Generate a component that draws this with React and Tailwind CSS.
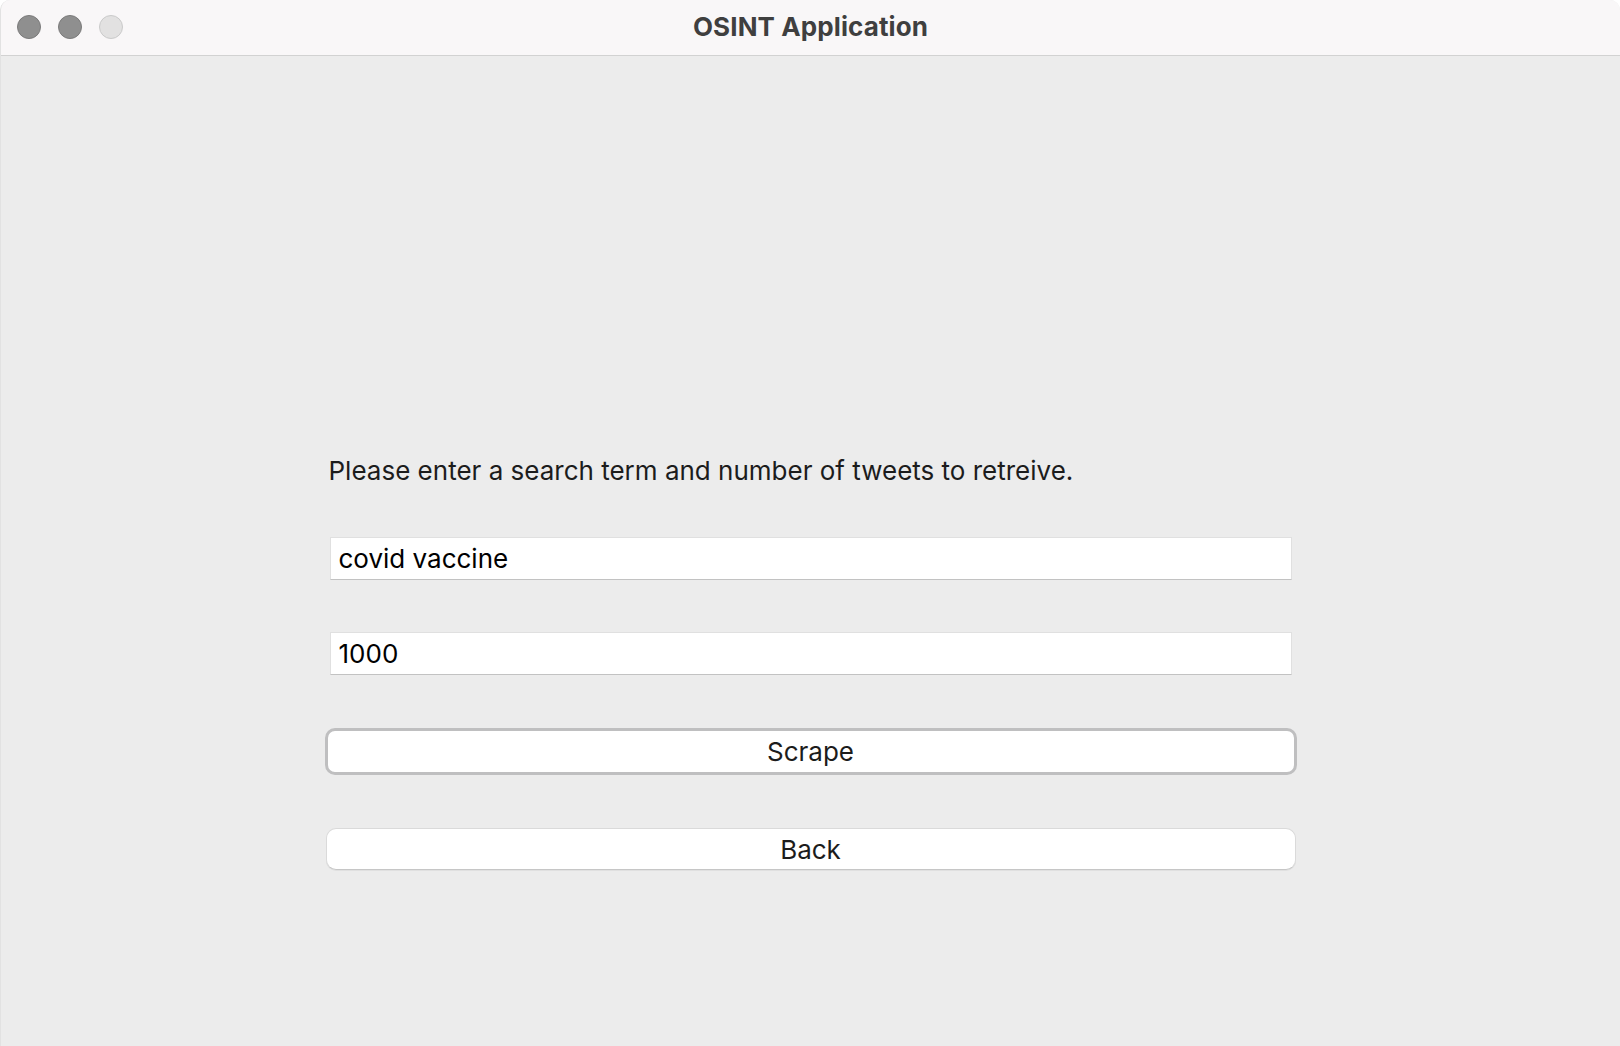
import { useState } from "react";

const font = { fontFamily: "Inter, 'Noto Sans', sans-serif" };

function TrafficLights() {
  return (
    <div className="absolute left-[16px] top-[15px] flex gap-[17px]">
      <span className="block w-[24px] h-[24px] rounded-full bg-[#8f8f8f] border border-[#7b7b7b]" />
      <span className="block w-[24px] h-[24px] rounded-full bg-[#8f8f8f] border border-[#7b7b7b]" />
      <span className="block w-[24px] h-[24px] rounded-full bg-[#e2e1e1] border border-[#cacaca]" />
    </div>
  );
}

export default function App() {
  const [term, setTerm] = useState("covid vaccine");
  const [count, setCount] = useState("1000");

  return (
    <div className="w-[1620px] h-[1046px] bg-white overflow-hidden" style={font}>
      <div className="w-full h-full flex flex-col bg-[#ececec] rounded-t-[10px] border-l border-[#e2e2e2] overflow-hidden">
        {/* Title bar */}
        <div className="relative h-[56px] shrink-0 bg-[#f9f7f8] border-b border-[#d2d2d2] flex items-center justify-center">
          <TrafficLights />
          <h1 className="text-[26px] font-bold text-[#3f3f3f] tracking-[0.1px] pb-[2px]">OSINT Application</h1>
        </div>

        {/* Form */}
        <div className="w-[972px] mx-auto pt-[399px] flex flex-col">
          <p className="text-[26px] leading-[32px] text-[#1c1c1c] pl-[4px]">
            Please enter a search term and number of tweets to retreive.
          </p>

          <input
            value={term}
            onChange={(e) => setTerm(e.target.value)}
            className="mt-[50px] mx-[5px] h-[43px] bg-white border border-[#e0e0e0] border-b-[#c2c2c2] px-[8px] text-[26px] text-black outline-none"
            style={font}
          />
          <input
            value={count}
            onChange={(e) => setCount(e.target.value)}
            className="mt-[52px] mx-[5px] h-[43px] bg-white border border-[#e0e0e0] border-b-[#c2c2c2] px-[8px] text-[26px] text-black outline-none"
            style={font}
          />

          <button
            className="mt-[53px] h-[47px] bg-white rounded-[10px] border-[3px] border-[#bfbfc0] text-[26px] text-[#1c1c1c] flex items-center justify-center"
            style={font}
          >
            Scrape
          </button>
          <button
            className="mt-[53px] mx-[1px] h-[42px] bg-white rounded-[10px] border border-[#dadada] border-b-[#c6c6c6] shadow-[0_1px_0_rgba(0,0,0,0.05)] text-[26px] text-[#1c1c1c] flex items-center justify-center"
            style={font}
          >
            Back
          </button>
        </div>
      </div>
    </div>
  );
}
